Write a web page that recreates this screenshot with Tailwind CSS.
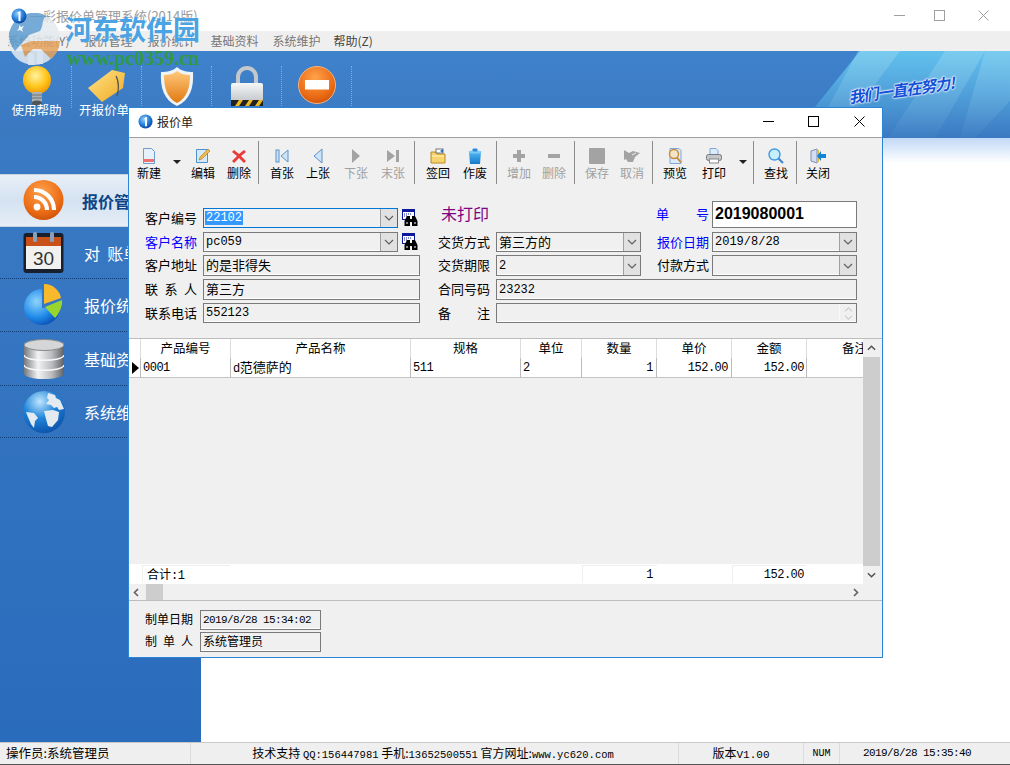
<!DOCTYPE html>
<html lang="zh-CN">
<head>
<meta charset="UTF-8">
<title>报价单管理系统</title>
<script src="https://cdn.jsdelivr.net/npm/@tailwindcss/browser@4"></script>
</head>
<body class="bg-white font-['Noto_Sans_CJK_SC','Liberation_Sans',sans-serif] text-[13px] leading-none text-black">

<svg width="0" height="0" class="absolute">
  <defs>
    <radialGradient id="gInfo" cx="40%" cy="35%" r="70%"><stop offset="0" stop-color="#8fd0ff"/><stop offset="0.6" stop-color="#1f78d8"/><stop offset="1" stop-color="#0b3f9a"/></radialGradient>
    <radialGradient id="gBulb" cx="45%" cy="35%" r="65%"><stop offset="0" stop-color="#fff3a0"/><stop offset="0.6" stop-color="#ffc61e"/><stop offset="1" stop-color="#f09a05"/></radialGradient>
    <linearGradient id="gTag" x1="0" y1="0" x2="1" y2="1"><stop offset="0" stop-color="#ffe38a"/><stop offset="1" stop-color="#f0aa22"/></linearGradient>
    <linearGradient id="gShield" x1="0" y1="0" x2="0" y2="1"><stop offset="0" stop-color="#ffc87a"/><stop offset="1" stop-color="#e07a12"/></linearGradient>
    <linearGradient id="gLock" x1="0" y1="0" x2="0" y2="1"><stop offset="0" stop-color="#f6f7f7"/><stop offset="1" stop-color="#b7bcc0"/></linearGradient>
    <radialGradient id="gOrange" cx="45%" cy="30%" r="75%"><stop offset="0" stop-color="#ffa24a"/><stop offset="0.7" stop-color="#ea6a14"/><stop offset="1" stop-color="#c94f08"/></radialGradient>
    <radialGradient id="gPie" cx="35%" cy="35%" r="75%"><stop offset="0" stop-color="#8fd4ff"/><stop offset="0.6" stop-color="#1e8ae8"/><stop offset="1" stop-color="#0a45b0"/></radialGradient>
    <linearGradient id="gDb" x1="0" y1="0" x2="1" y2="0"><stop offset="0" stop-color="#77797c"/><stop offset="0.35" stop-color="#f2f3f4"/><stop offset="0.7" stop-color="#b9bbbe"/><stop offset="1" stop-color="#5f6164"/></linearGradient>
    <radialGradient id="gGlobe" cx="40%" cy="25%" r="80%"><stop offset="0" stop-color="#bfe6ff"/><stop offset="0.5" stop-color="#1f85d8"/><stop offset="1" stop-color="#0a4fa8"/></radialGradient>
    <linearGradient id="gTrash" x1="0" y1="0" x2="0" y2="1"><stop offset="0" stop-color="#4fb8f2"/><stop offset="1" stop-color="#1478cc"/></linearGradient>
    <linearGradient id="gRay" x1="0" y1="0" x2="0" y2="1"><stop offset="0" stop-color="#66c8f0" stop-opacity="0.9"/><stop offset="1" stop-color="#66c8f0" stop-opacity="0"/></linearGradient>
    <linearGradient id="gRay2" x1="0" y1="0" x2="0" y2="1"><stop offset="0" stop-color="#b4e4f6" stop-opacity="0.3"/><stop offset="1" stop-color="#b4e4f6" stop-opacity="0.03"/></linearGradient>
    <symbol id="iInfo" viewBox="0 0 16 16"><circle cx="8" cy="8" r="7.5" fill="url(#gInfo)"/><path d="M6.5 4.5 9.5 3v10h-2V6z" fill="#fff"/></symbol>
    <symbol id="iFind" viewBox="0 0 16 18"><rect x="0.5" y="0.5" width="12" height="10" fill="#fff" stroke="#0a1a9a"/><rect x="0.5" y="0.5" width="12" height="2.5" fill="#0a1a9a"/><path d="M2 5h8M2 7h3" stroke="#0a1a9a" stroke-dasharray="1 1"/><path d="M5 7h3v3h2V7h3l2.500 5v5H10v-4H8v4H2.500v-5z" fill="#000"/><path d="M4 14h2M12 14h2" stroke="#fff"/></symbol>
    <symbol id="iChev" viewBox="0 0 10 6"><path d="M1 1l4 4 4-4" fill="none" stroke="#606060" stroke-width="1.2"/></symbol>
  </defs>
</svg>

<div class="relative flex h-[765px] w-[1010px] flex-col overflow-hidden">
  <!-- main window title -->
  <div class="flex h-[31px] shrink-0 items-center bg-white pl-[11px] text-[#9a9a9a]">
    <svg class="relative z-10 h-4 w-4"><use href="#iInfo"/></svg>
    <span class="ml-[3px] text-[13px]">一彩报价单管理系统(2014版)</span>
    <div class="ml-auto flex items-center gap-[29px] pr-[21px]">
      <svg class="h-[11px] w-[11px]" viewBox="0 0 11 11"><path d="M0 5.5h11" stroke="#a0a0a0"/></svg>
      <svg class="h-[11px] w-[11px]" viewBox="0 0 11 11"><rect x="0.5" y="0.5" width="10" height="10" fill="none" stroke="#a0a0a0"/></svg>
      <svg class="ml-[4px] h-[11px] w-[11px]" viewBox="0 0 11 11"><path d="M0.5 0.5l10 10M10.5 0.5l-10 10" stroke="#a0a0a0"/></svg>
    </div>
  </div>
  <!-- menu -->
  <div class="flex h-[20px] shrink-0 items-center gap-[14px] bg-[#efefef] pl-[7px] text-[12px] text-[#777]">
    <span>系统功能(Y)</span><span class="ml-px">报价管理</span><span class="ml-px">报价统计</span><span class="ml-px">基础资料</span><span>系统维护</span><span class="-ml-px text-[#444]">帮助(Z)</span>
  </div>
  <!-- banner -->
  <div class="relative h-[87px] shrink-0 overflow-hidden bg-gradient-to-b from-[#3f82cc] to-[#3a78c0]">
    <svg class="absolute inset-0 h-full w-full" viewBox="0 0 1010 87" preserveAspectRatio="none">
      <polygon points="860,0 1010,0 1010,87 790,87" fill="url(#gRay)"/>
      <polygon points="858,0 900,0 835,87 812,87" fill="url(#gRay2)"/>
      <polygon points="945,0 985,0 935,87 888,87" fill="url(#gRay2)"/>
      <polygon points="985,0 1010,0 1010,50 975,87 960,87" fill="url(#gRay2)"/>
    </svg>
    <div class="relative flex h-full pl-[2px] pt-[15px]">
      <div class="flex h-[42px] w-[70px] flex-col items-center border-r border-dotted border-[#9cc0e8]/70">
        <svg class="h-[41px] w-[30px] shrink-0" viewBox="0 0 30 41"><circle cx="15" cy="14" r="14" fill="url(#gBulb)"/><rect x="10" y="26" width="10" height="10" rx="1" fill="#aab0b4"/><path d="M10 29h10M10 32h10" stroke="#6d7276"/><ellipse cx="15" cy="37" rx="5" ry="2.500" fill="#4f5457"/></svg>
        <span class="-mt-[3px] shrink-0 whitespace-nowrap text-[12.5px] text-white">使用帮助</span>
      </div>
      <div class="flex h-[42px] w-[70px] flex-col items-center border-r border-dotted border-[#9cc0e8]/70">
        <svg class="h-[41px] w-[40px] shrink-0" viewBox="0 0 40 41"><path d="M1 22 25 4l13 3-2 15-21 14z" fill="url(#gTag)"/><path d="M29 10c3 5 3 15 1 20" fill="none" stroke="#555" stroke-width="1.300"/></svg>
        <span class="-ml-[5px] -mt-[3px] shrink-0 whitespace-nowrap text-[12.5px] text-white">开报价单</span>
      </div>
      <div class="flex h-[42px] w-[70px] flex-col items-center border-r border-dotted border-[#9cc0e8]/70">
        <svg class="h-[41px] w-[36px] shrink-0" viewBox="0 0 36 41"><path d="M18 1c4 4 10 5 16 5 1 16-3 28-16 34C5 34 1 22 2 6c6 0 12-1 16-5z" fill="#eef3f5"/><path d="M18 5c4 3 8 4 13 4 0 13-3 23-13 28C8 32 5 22 5 9c5 0 9-1 13-4z" fill="url(#gShield)"/></svg>
      </div>
      <div class="flex h-[42px] w-[70px] flex-col items-center border-r border-dotted border-[#9cc0e8]/70">
        <svg class="h-[41px] w-[34px] shrink-0" viewBox="0 0 34 41"><path d="M8 18V11a9 9 0 0 1 18 0v7" fill="none" stroke="#c3c8cc" stroke-width="4"/><rect x="1" y="17" width="32" height="23" rx="2" fill="url(#gLock)"/><path d="M1 34h32v6H1z" fill="#222"/><path d="M5 40l4-6h4l-4 6zM15 40l4-6h4l-4 6zM25 40l4-6h4l-4 6z" fill="#e8b820"/></svg>
      </div>
      <div class="flex h-[42px] w-[70px] flex-col items-center border-r border-dotted border-[#9cc0e8]/70">
        <svg class="h-[38px] w-[38px] shrink-0" viewBox="0 0 38 38"><circle cx="19" cy="19" r="18.500" fill="url(#gOrange)" stroke="#f7b27a"/><rect x="7" y="14" width="24" height="9.500" fill="#fff"/></svg>
      </div>
    </div>
    <span class="absolute left-[848px] top-[31px] rotate-[-8deg] whitespace-nowrap text-[15.5px] font-bold italic tracking-[-1px] text-[#1450d8] [text-shadow:0_0_2px_#fff,0_0_2px_#fff,0_0_2px_#fff]">我们一直在努力!</span>
  </div>

  <!-- body -->
  <div class="flex min-h-0 flex-1">
    <div class="flex w-[201px] shrink-0 flex-col bg-gradient-to-b from-[#3a7ac4] to-[#2a6cbc] pt-[36px]">
      <div class="flex h-[53px] items-center border-y border-[#c5d2e0] bg-gradient-to-b from-[#e8eff7] via-[#d4e2f1] to-[#e6eef7] pl-[23px]">
        <svg class="h-[41px] w-[41px]" viewBox="0 0 41 41"><circle cx="20.500" cy="20" r="20" fill="url(#gOrange)"/><circle cx="14" cy="27" r="3.400" fill="#fff"/><path d="M11 17a13 13 0 0 1 13 13M11 10a20 20 0 0 1 20 20" fill="none" stroke="#fff" stroke-width="4.200"/></svg>
        <span class="ml-[18px] text-[16px] font-bold text-[#0d4488]">报价管理</span>
      </div>
      <div class="flex h-[52px] items-center border-b border-dotted border-[#123f78] pl-[23px]">
        <svg class="h-[41px] w-[41px]" viewBox="0 0 41 41"><rect x="0.500" y="1" width="40" height="40" rx="3" fill="#17202c"/><rect x="3" y="5" width="35" height="10" fill="#c9521a"/><rect x="3" y="14" width="35" height="23" fill="#f1f1f0"/><rect x="10" y="0" width="4" height="10" rx="1.500" fill="#8aa0b8"/><rect x="27" y="0" width="4" height="10" rx="1.500" fill="#8aa0b8"/><text x="20.500" y="33" text-anchor="middle" font-family="Liberation Sans" font-size="19" fill="#333">30</text></svg>
        <span class="ml-[20px] text-[16px] text-white">对&nbsp;&nbsp;账单</span>
      </div>
      <div class="flex h-[53px] items-center border-b border-dotted border-[#123f78] pl-[24px]">
        <svg class="h-[42px] w-[40px]" viewBox="0 0 40 42"><path d="M18 5A18 18 0 1 0 36 24H18z" fill="url(#gPie)"/><path d="M20 0a17 17 0 0 1 17 14l-17 6z" fill="#f8b92c"/><path d="M21 23l17-7c1 5-3 14-7 18z" fill="#98d62e"/></svg>
        <span class="ml-[20px] text-[16px] text-white">报价统计</span>
      </div>
      <div class="flex h-[54px] items-center border-b border-dotted border-[#123f78] pl-[24px]">
        <svg class="h-[40px] w-[40px]" viewBox="0 0 40 40"><path d="M0 6v28c0 8 40 8 40 0V6z" fill="url(#gDb)"/><ellipse cx="20" cy="6" rx="20" ry="5.500" fill="#d4d6d8" stroke="#888"/><path d="M0 16c0 7 40 7 40 0M0 26c0 7 40 7 40 0" fill="none" stroke="#f8f8f8" stroke-width="1.500"/></svg>
        <span class="ml-[20px] text-[16px] text-white">基础资料</span>
      </div>
      <div class="flex h-[52px] items-center border-b border-dotted border-[#123f78] pl-[23px]">
        <svg class="h-[44px] w-[42px]" viewBox="0 0 42 44"><circle cx="21" cy="22" r="21" fill="url(#gGlobe)"/><path d="M25 3l7 2 1 3 4 2 4 9-5 1-2-3-3 1-3-3-5-1 3-4-2-2zM21 21l9-1 6 2-1 8-6 7-4-1-2-7zM3 22l8 1 4 5-3 3-1 7-3-4-3-7z" fill="#e3ebf1"/></svg>
        <span class="ml-[19px] text-[16px] text-white">系统维护</span>
      </div>
    </div>
    <div class="flex-1 bg-white">
      <div class="h-[25px] bg-gradient-to-b from-[#c2d9f7] to-white"></div>
    </div>
  </div>

  <!-- status bar -->
  <div class="flex h-[22px] shrink-0 items-center border-t border-[#c8c8c8] bg-[#efefef] text-[12.5px]">
    <div class="flex h-full w-[191px] items-center border-r border-[#dcdcdc] pl-[6px]">操作员:系统管理员</div>
    <div class="flex h-full w-[488px] items-center justify-center whitespace-nowrap border-r border-[#dcdcdc] pr-[3px] text-[12px]"><span>技术支持&nbsp;<span class="font-['Liberation_Mono'] text-[10.5px]">QQ:156447981</span>&nbsp;手机:<span class="font-['Liberation_Mono'] text-[10.5px]">13652500551</span>&nbsp;官方网址:<span class="font-['Liberation_Mono'] text-[10.5px]">www.yc620.com</span></span></div>
    <div class="flex h-full w-[125px] items-center justify-center border-r border-[#dcdcdc] text-[12px]"><span>版本<span class="font-['Liberation_Mono'] text-[11px]">V1.00</span></span></div>
    <div class="flex h-full w-[36px] items-center justify-center border-r border-[#dcdcdc] font-['Liberation_Mono'] text-[10px]">NUM</div>
    <div class="flex h-full flex-1 items-center pl-[23px] font-['Liberation_Mono'] text-[11px] tracking-[-0.6px]">2019/8/28 15:35:40</div>
  </div>
  <div class="h-px shrink-0 bg-[#555]"></div>

  <!-- watermark -->
  <div class="pointer-events-none absolute left-[7px] top-[13px] flex">
    <svg class="h-[52px] w-[54px] opacity-85" viewBox="0 0 54 52">
      <circle cx="27" cy="26" r="26" fill="#e4ebf0"/>
      <path d="M2 20A26 26 0 0 1 40 3C34 6 37 12 33 18L22 22 8 38A26 26 0 0 1 2 20z" fill="#5e9dd0"/>
      <path d="M14 32 24 28H53A26 26 0 0 1 44 46L34 36 26 36 18 44z" fill="#e6a25c"/>
      <path d="M21 40h6v12h-6zM30 38h6v13h-6z" fill="#f2f5f7"/>
      <path d="M12 12l2 2 3-1-2 3 1 3-3-2-3 1 2-3z" fill="#f2f5f7"/>
    </svg>
    <div class="ml-[4px] flex flex-col">
      <span class="mt-[2px] whitespace-nowrap text-[27px] font-bold text-[#4aa3e2] [text-shadow:0_0_2px_#fff]">河东软件园</span>
      <span class="ml-[2px] mt-[6px] whitespace-nowrap font-['Liberation_Serif',serif] text-[20px] font-bold text-[#2f9a44]">www.pc0359.cn</span>
    </div>
  </div>

  <!-- quote dialog -->
  <div class="absolute left-[128px] top-[107px] flex h-[551px] w-[755px] flex-col border border-[#2a84d8] bg-[#f0f0f0] text-[13px]">
    <div class="flex h-[30px] shrink-0 items-center border-b border-[#a0a0a0] bg-white pb-[2px] pl-[9px]">
      <svg class="h-[15px] w-[15px]"><use href="#iInfo"/></svg>
      <span class="ml-[4px] text-[12px] text-[#222]">报价单</span>
      <div class="ml-auto flex items-center pr-[17px]">
        <svg class="h-[11px] w-[11px]" viewBox="0 0 11 11"><path d="M0 5.500h11" stroke="#000"/></svg>
        <svg class="ml-[34px] h-[11px] w-[11px]" viewBox="0 0 11 11"><rect x="0.500" y="0.500" width="10" height="10" fill="none" stroke="#000"/></svg>
        <svg class="ml-[35px] h-[11px] w-[11px]" viewBox="0 0 11 11"><path d="M0.500 0.500l10 10M10.500 0.500l-10 10" stroke="#000"/></svg>
      </div>
    </div>

    <!-- toolbar -->
    <div class="flex h-[51px] shrink-0 items-start pl-px pt-[3px] text-[12px]">
      <div class="flex w-[38px] flex-col items-center pt-[7px]">
        <svg class="h-[16px] w-[16px]" viewBox="0 0 16 16"><path d="M2.500 0.500h8l3 3v12h-11z" fill="#e6f1fc" stroke="#6f9ccc"/><rect x="3" y="11" width="10" height="3" fill="#f07070"/></svg>
        <span class="mt-[3px]">新建</span>
      </div>
      <div class="w-[18px] pl-[5px] pt-[19px]"><div class="h-0 w-0 border-x-[4px] border-t-[4px] border-x-transparent border-t-[#222]"></div></div>
      <div class="flex w-[34px] flex-col items-center pt-[7px]">
        <svg class="h-[16px] w-[16px]" viewBox="0 0 16 16"><path d="M1.500 1.500h11v13h-11z" fill="#d6e9fa" stroke="#4e90cc"/><path d="M4 12l1-3 8-8 2 2-8 8z" fill="#efb948" stroke="#a87a20" stroke-width="0.600"/></svg>
        <span class="mt-[3px]">编辑</span>
      </div>
      <div class="flex w-[38px] flex-col items-center pt-[7px]">
        <svg class="h-[16px] w-[16px]" viewBox="0 0 16 16"><path d="M3 2l5 4 5-4 2 2-5 4 5 5-2 2-5-5-5 5-2-2 5-5-5-4z" fill="#e93a3a"/></svg>
        <span class="mt-[3px]">删除</span>
      </div>
      <div class="h-[43px] w-px bg-[#8c8c8c]"></div>

      <div class="ml-[5px] flex w-[36px] flex-col items-center pt-[7px]">
        <svg class="h-[16px] w-[16px]" viewBox="0 0 16 16"><rect x="2" y="2" width="3" height="12" fill="#cfe3f7" stroke="#5b93c9"/><path d="M14 2v12L7 8z" fill="#cfe3f7" stroke="#5b93c9"/></svg>
        <span class="mt-[3px]">首张</span>
      </div>
      <div class="flex w-[36px] flex-col items-center pt-[7px]">
        <svg class="h-[16px] w-[16px]" viewBox="0 0 16 16"><path d="M12 1v14L4 8z" fill="#cfe3f7" stroke="#5b93c9"/></svg>
        <span class="mt-[3px]">上张</span>
      </div>
      <div class="flex w-[40px] flex-col items-center pt-[7px] text-[#a0a0a0]">
        <svg class="h-[16px] w-[16px]" viewBox="0 0 16 16"><path d="M4 1v14l8-7z" fill="#a3a3a3"/></svg>
        <span class="mt-[3px]">下张</span>
      </div>
      <div class="flex w-[34px] flex-col items-center pt-[7px] text-[#a0a0a0]">
        <svg class="h-[16px] w-[16px]" viewBox="0 0 16 16"><path d="M2 2v12l8-6zM11 2h3v12h-3z" fill="#a3a3a3"/></svg>
        <span class="mt-[3px]">末张</span>
      </div>
      <div class="ml-[4px] h-[43px] w-px bg-[#8c8c8c]"></div>

      <div class="ml-[5px] flex w-[36px] flex-col items-center pt-[7px]">
        <svg class="h-[16px] w-[16px]" viewBox="0 0 16 16"><path d="M1 4h5l1 2h8v9H1z" fill="#f7d470" stroke="#b88a20"/><path d="M2 8h12" stroke="#fff3c0"/><rect x="6" y="1" width="7" height="4" fill="#fff" stroke="#777"/><path d="M10 3l3-2v4z" fill="#2a6cc0"/></svg>
        <span class="mt-[3px]">签回</span>
      </div>
      <div class="flex w-[38px] flex-col items-center pt-[7px]">
        <svg class="h-[16px] w-[16px]" viewBox="0 0 16 16"><path d="M2 4h12l-1 12H3z" fill="url(#gTrash)"/><ellipse cx="8" cy="4" rx="6.500" ry="1.600" fill="#7ccbf5"/><rect x="5.500" y="0.500" width="5" height="3" rx="1" fill="#2a8ad8"/></svg>
        <span class="mt-[3px]">作废</span>
      </div>
      <div class="ml-[2px] h-[43px] w-px bg-[#8c8c8c]"></div>

      <div class="ml-[4px] flex w-[36px] flex-col items-center pt-[7px] text-[#a0a0a0]">
        <svg class="h-[16px] w-[16px]" viewBox="0 0 16 16"><path d="M6 2h4v4h4v4h-4v4H6v-4H2V6h4z" fill="#a3a3a3"/></svg>
        <span class="mt-[3px]">增加</span>
      </div>
      <div class="flex w-[34px] flex-col items-center pt-[7px] text-[#a0a0a0]">
        <svg class="h-[16px] w-[16px]" viewBox="0 0 16 16"><rect x="2" y="6" width="12" height="4" fill="#a3a3a3"/></svg>
        <span class="mt-[3px]">删除</span>
      </div>
      <div class="ml-[3px] h-[43px] w-px bg-[#8c8c8c]"></div>

      <div class="ml-[4px] flex w-[36px] flex-col items-center pt-[7px] text-[#a0a0a0]">
        <svg class="h-[16px] w-[16px]" viewBox="0 0 16 16"><rect width="16" height="16" rx="1" fill="#a3a3a3"/></svg>
        <span class="mt-[3px]">保存</span>
      </div>
      <div class="flex w-[34px] flex-col items-center pt-[7px] text-[#a0a0a0]">
        <svg class="h-[16px] w-[16px]" viewBox="0 0 16 16"><path d="M0 2l5 3 4-2 7 2-5 4-2 5H4l-2-3-2 1z" fill="#a3a3a3"/><path d="M8 7l4-2" stroke="#f0f0f0"/></svg>
        <span class="mt-[3px]">取消</span>
      </div>
      <div class="ml-[3px] h-[43px] w-px bg-[#8c8c8c]"></div>

      <div class="ml-[4px] flex w-[36px] flex-col items-center pt-[7px]">
        <svg class="h-[16px] w-[16px]" viewBox="0 0 16 16"><path d="M3 0.500h9l2 2v13H3z" fill="#dcebfb" stroke="#7fa8d6"/><circle cx="7" cy="6" r="4.500" fill="#f3e4c8" stroke="#c88a3a" stroke-width="1.400"/><path d="M10 9.500l4 5" stroke="#c88a3a" stroke-width="2"/></svg>
        <span class="mt-[3px]">预览</span>
      </div>
      <div class="flex w-[42px] flex-col items-center pt-[7px]">
        <svg class="h-[16px] w-[16px]" viewBox="0 0 16 16"><path d="M4 0.500h6l2 2V7H4z" fill="#dcebfb" stroke="#7fa8d6"/><rect x="0.500" y="6.500" width="15" height="6" rx="2" fill="#c4c7ca" stroke="#75797c"/><rect x="3.500" y="11" width="9" height="4" fill="#fff" stroke="#888"/></svg>
        <span class="mt-[3px]">打印</span>
      </div>
      <div class="w-[16px] pl-[4px] pt-[19px]"><div class="h-0 w-0 border-x-[4px] border-t-[4px] border-x-transparent border-t-[#222]"></div></div>
      <div class="ml-[2px] h-[43px] w-px bg-[#8c8c8c]"></div>

      <div class="ml-[4px] flex w-[36px] flex-col items-center pt-[7px]">
        <svg class="h-[16px] w-[16px]" viewBox="0 0 16 16"><circle cx="6.500" cy="6.500" r="5.500" fill="#c7effb" stroke="#3f9ae0" stroke-width="1.400"/><path d="M10.500 10.500l4.500 4.500" stroke="#3f8ad0" stroke-width="2.200"/></svg>
        <span class="mt-[3px]">查找</span>
      </div>
      <div class="ml-[2px] h-[43px] w-px bg-[#8c8c8c]"></div>

      <div class="ml-[3px] flex w-[36px] flex-col items-center pt-[7px]">
        <svg class="h-[16px] w-[16px]" viewBox="0 0 16 16"><path d="M1 3l6-2v14l-6-2z" fill="#d3def0" stroke="#7f8fb0"/><rect x="7" y="2" width="2" height="12" fill="#e9b840"/><path d="M16 6h-5V3L7 8l4 5v-3h5z" fill="#0f84d8"/></svg>
        <span class="mt-[3px]">关闭</span>
      </div>
    </div>

    <!-- form -->
    <div class="flex shrink-0 flex-col pl-[16px] pt-[12px]">
      <div class="flex h-[27px] items-end">
        <div class="flex w-[293px] items-center">
          <span class="w-[58px] pb-[2px]">客户编号</span>
          <div class="flex h-[20px] w-[195px] items-stretch border border-[#0078d7] bg-[#f0f0f0] font-['Liberation_Mono'] text-[12px]">
            <div class="flex flex-1 items-center pl-px"><span class="bg-[#3399ff] px-px py-[1px] text-white">22102</span></div>
            <div class="flex w-[17px] items-center justify-center border-l border-[#a0a0a0] bg-[#e1e1e1]"><svg class="h-[6px] w-[10px]"><use href="#iChev"/></svg></div>
          </div>
          <svg class="ml-[4px] h-[18px] w-[16px]"><use href="#iFind"/></svg>
        </div>
        <div class="flex h-[20px] w-[214px] items-center pb-[10px] pl-[3px] text-[16px] text-[#800080]">未打印</div>
        <div class="flex items-end">
          <span class="mb-[8px] ml-[4px] flex w-[53px] justify-between text-[#0000ff]"><span>单</span><span>号</span></span>
          <div class="ml-[3px] flex h-[27px] w-[145px] items-center border border-[#7a7a7a] bg-white pb-px pl-[2px] font-['Liberation_Sans'] text-[16px] font-bold">2019080001</div>
        </div>
      </div>

      <div class="mt-[4px] flex h-[20px] items-center">
        <div class="flex w-[293px] items-center">
          <span class="w-[58px] pb-[2px] text-[#0000ff]">客户名称</span>
          <div class="flex h-[20px] w-[195px] items-stretch border border-[#7a7a7a] shadow-[inset_0_-1px_0_#fff]">
            <div class="flex flex-1 items-center pl-[2px] font-['Liberation_Mono'] text-[12px]">pc059</div>
            <div class="flex w-[17px] items-center justify-center border-l border-[#a0a0a0] bg-[#e1e1e1]"><svg class="h-[6px] w-[10px]"><use href="#iChev"/></svg></div>
          </div>
          <svg class="ml-[4px] h-[18px] w-[16px]"><use href="#iFind"/></svg>
        </div>
        <div class="flex w-[214px] items-center">
          <span class="w-[58px] pb-[2px]">交货方式</span>
          <div class="flex h-[20px] w-[145px] items-stretch border border-[#7a7a7a] shadow-[inset_0_-1px_0_#fff]">
            <div class="flex flex-1 items-center pb-[2px] pl-[2px]">第三方的</div>
            <div class="flex w-[17px] items-center justify-center border-l border-[#a0a0a0] bg-[#e1e1e1]"><svg class="h-[6px] w-[10px]"><use href="#iChev"/></svg></div>
          </div>
        </div>
        <span class="ml-[5px] w-[55px] pb-[2px] text-[#0000ff]">报价日期</span>
        <div class="flex h-[20px] w-[145px] items-stretch border border-[#7a7a7a] shadow-[inset_0_-1px_0_#fff]">
          <div class="flex flex-1 items-center pl-[2px] font-['Liberation_Mono'] text-[12px]">2019/8/28</div>
          <div class="flex w-[17px] items-center justify-center border-l border-[#a0a0a0] bg-[#e1e1e1]"><svg class="h-[6px] w-[10px]"><use href="#iChev"/></svg></div>
        </div>
      </div>

      <div class="mt-[3px] flex h-[21px] items-center">
        <div class="flex w-[293px] items-center">
          <span class="w-[58px] pb-[2px]">客户地址</span>
          <div class="flex h-[21px] w-[217px] items-center border border-[#7a7a7a] pb-[2px] pl-[2px] shadow-[inset_0_-1px_0_#fff]">的是非得失</div>
        </div>
        <div class="flex w-[214px] items-center">
          <span class="w-[58px] pb-[2px]">交货期限</span>
          <div class="flex h-[21px] w-[145px] items-stretch border border-[#7a7a7a] shadow-[inset_0_-1px_0_#fff]">
            <div class="flex flex-1 items-center pl-[2px] font-['Liberation_Mono'] text-[12px]">2</div>
            <div class="flex w-[17px] items-center justify-center border-l border-[#a0a0a0] bg-[#e1e1e1]"><svg class="h-[6px] w-[10px]"><use href="#iChev"/></svg></div>
          </div>
        </div>
        <span class="ml-[5px] w-[55px] pb-[2px]">付款方式</span>
        <div class="flex h-[21px] w-[145px] items-stretch border border-[#7a7a7a] shadow-[inset_0_-1px_0_#fff]">
          <div class="flex-1"></div>
          <div class="flex w-[17px] items-center justify-center border-l border-[#a0a0a0] bg-[#e1e1e1]"><svg class="h-[6px] w-[10px]"><use href="#iChev"/></svg></div>
        </div>
      </div>

      <div class="mt-[3px] flex h-[21px] items-center">
        <div class="flex w-[293px] items-center">
          <span class="flex w-[52px] justify-between pb-[2px]"><span>联</span><span>系</span><span>人</span></span>
          <div class="ml-[6px] flex h-[21px] w-[217px] items-center border border-[#7a7a7a] pb-[2px] pl-[2px] shadow-[inset_0_-1px_0_#fff]">第三方</div>
        </div>
        <span class="w-[58px] pb-[2px]">合同号码</span>
        <div class="flex h-[21px] w-[361px] items-center border border-[#7a7a7a] pl-[2px] font-['Liberation_Mono'] text-[12px] shadow-[inset_0_-1px_0_#fff]">23232</div>
      </div>

      <div class="mb-[15px] mt-[3px] flex h-[20px] items-center">
        <div class="flex w-[293px] items-center">
          <span class="w-[58px] pb-[2px]">联系电话</span>
          <div class="flex h-[20px] w-[217px] items-center border border-[#7a7a7a] pl-[2px] font-['Liberation_Mono'] text-[12px] shadow-[inset_0_-1px_0_#fff]">552123</div>
        </div>
        <span class="flex w-[52px] justify-between pb-[2px]"><span>备</span><span>注</span></span>
        <div class="ml-[6px] flex h-[20px] w-[361px] items-stretch justify-end border border-[#7a7a7a] shadow-[inset_0_-1px_0_#fff]">
          <div class="flex w-[17px] flex-col items-center justify-center gap-[3px] border-l border-[#f8f8f8]">
            <svg class="h-[5px] w-[9px] rotate-180 opacity-40"><use href="#iChev"/></svg>
            <svg class="h-[5px] w-[9px] opacity-40"><use href="#iChev"/></svg>
          </div>
        </div>
      </div>
    </div>

    <!-- grid -->
    <div class="flex h-[263px] shrink-0 border-y border-[#bcbcbc]">
      <div class="flex w-[734px] flex-col">
        <div class="flex h-[19px] shrink-0 bg-white text-center text-[12.5px]">
          <div class="w-[12px] border-r border-[#dcdcdc]"></div>
          <div class="w-[90px] border-r border-[#dcdcdc] pt-[3px]">产品编号</div>
          <div class="w-[180px] border-r border-[#dcdcdc] pt-[3px]">产品名称</div>
          <div class="w-[110px] border-r border-[#dcdcdc] pt-[3px]">规格</div>
          <div class="w-[61px] border-r border-[#dcdcdc] pt-[3px]">单位</div>
          <div class="w-[75px] border-r border-[#dcdcdc] pt-[3px]">数量</div>
          <div class="w-[75px] border-r border-[#dcdcdc] pt-[3px]">单价</div>
          <div class="w-[75px] border-r border-[#dcdcdc] pt-[3px]">金额</div>
          <div class="flex-1 overflow-hidden whitespace-nowrap pl-[35px] pt-[3px] text-left">备注</div>
        </div>
        <div class="flex h-[20px] shrink-0 items-stretch border-b border-[#c4c4c4] bg-white font-['Liberation_Mono'] text-[12px] tracking-[-0.5px]">
          <div class="flex w-[12px] items-center border-r border-[#bcbcbc] pl-[3px]"><div class="h-0 w-0 border-y-[6px] border-l-[7px] border-y-transparent border-l-black"></div></div>
          <div class="flex w-[90px] items-center border-r border-[#bcbcbc] pl-[2px]">0001</div>
          <div class="flex w-[180px] items-center border-r border-[#bcbcbc] pl-[2px]"><span>d<span class="font-['Noto_Sans_CJK_SC'] text-[13px] tracking-normal">范德萨的</span></span></div>
          <div class="flex w-[110px] items-center border-r border-[#bcbcbc] pl-[2px]">511</div>
          <div class="flex w-[61px] items-center border-r border-[#bcbcbc] pl-[2px]">2</div>
          <div class="flex w-[75px] items-center justify-end border-r border-[#bcbcbc] pr-[3px]">1</div>
          <div class="flex w-[75px] items-center justify-end border-r border-[#bcbcbc] pr-[3px]">152.00</div>
          <div class="flex w-[75px] items-center justify-end border-r border-[#bcbcbc] pr-[2px]">152.00</div>
          <div class="flex-1"></div>
        </div>
        <div class="flex-1 bg-[#f0f0f0]"></div>
        <div class="flex h-[20px] shrink-0 bg-white pl-[13px] pt-[1px] font-['Liberation_Mono'] text-[12px] tracking-[-0.5px]">
          <div class="flex h-[18px] w-[88px] items-center border-l border-t border-[#eeeeee] pl-[4px]"><span><span class="font-['Noto_Sans_CJK_SC'] text-[12px] tracking-normal">合计</span>:1</span></div>
          <div class="ml-[352px] flex h-[18px] w-[75px] items-center justify-end border-l border-t border-[#eeeeee] pr-[4px]">1</div>
          <div class="ml-[75px] flex h-[18px] w-[74px] items-center justify-end border-l border-t border-[#eeeeee] pr-[2px]">152.00</div>
        </div>
        <div class="flex h-[16px] shrink-0 items-center bg-[#f0f0f0]">
          <svg class="ml-[4px] h-[9px] w-[6px]" viewBox="0 0 6 9"><path d="M5 1 1.500 4.500 5 8" fill="none" stroke="#606060" stroke-width="1.600"/></svg>
          <div class="ml-[7px] h-[16px] w-[17px] bg-[#cdcdcd]"></div>
          <svg class="ml-auto mr-[4px] h-[9px] w-[6px]" viewBox="0 0 6 9"><path d="M1 1l3.500 3.500L1 8" fill="none" stroke="#606060" stroke-width="1.600"/></svg>
        </div>
      </div>
      <div class="flex w-[17px] flex-col items-center bg-[#f0f0f0]">
        <div class="flex h-[18px] shrink-0 items-center"><svg class="h-[6px] w-[9px] rotate-180" viewBox="0 0 10 6"><path d="M1 1l4 4 4-4" fill="none" stroke="#505050" stroke-width="1.600"/></svg></div>
        <div class="h-[209px] w-full shrink-0 bg-[#cdcdcd]"></div>
        <div class="flex h-[17px] shrink-0 items-center"><svg class="h-[6px] w-[9px]" viewBox="0 0 10 6"><path d="M1 1l4 4 4-4" fill="none" stroke="#505050" stroke-width="1.600"/></svg></div>
      </div>
    </div>

    <!-- footer -->
    <div class="flex flex-1 flex-col gap-[2px] pl-[16px] pt-[9px]">
      <div class="flex h-[20px] items-center">
        <span class="w-[55px] pb-[2px] text-[12px]">制单日期</span>
        <div class="flex h-[20px] w-[121px] items-center border border-[#7a7a7a] pl-[2px] font-['Liberation_Mono'] text-[11px] tracking-[-0.6px] shadow-[inset_0_-1px_0_#fff]">2019/8/28 15:34:02</div>
      </div>
      <div class="flex h-[20px] items-center">
        <span class="flex w-[48px] justify-between pb-[2px] text-[12px]"><span>制</span><span>单</span><span>人</span></span>
        <div class="ml-[7px] flex h-[20px] w-[121px] items-center border border-[#7a7a7a] pb-[2px] pl-[2px] text-[12px] shadow-[inset_0_-1px_0_#fff]">系统管理员</div>
      </div>
    </div>
  </div>
</div>
</body>
</html>
